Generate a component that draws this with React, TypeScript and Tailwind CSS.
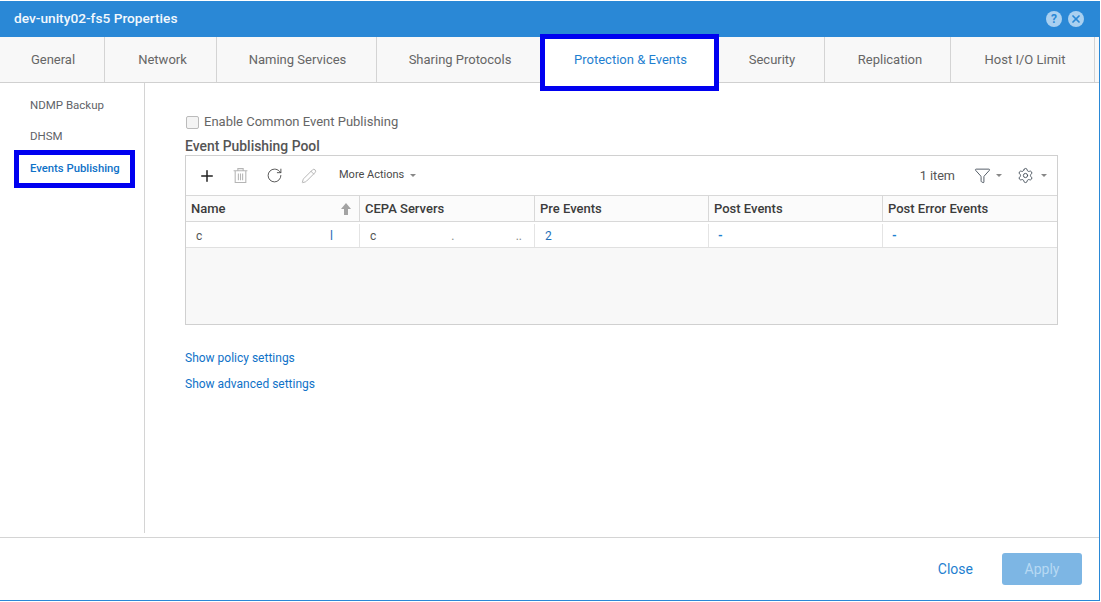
import { Filter, Pencil, Plus, RotateCw, Settings, X } from 'lucide-react';

const tabs = [
  { label: 'General', width: 'w-[105px] pl-[2px]' },
  { label: 'Network', width: 'w-[112px] pl-[4px]' },
  { label: 'Naming Services', width: 'w-[160px] pl-[2px]' },
  { label: 'Sharing Protocols', width: 'w-[166px] pl-[1px]' },
  { label: 'Protection & Events', width: 'w-[175px]', active: true },
  { label: 'Security', width: 'w-[107px] pl-[2px]' },
  { label: 'Replication', width: 'w-[126px] pl-[5px]' },
  { label: 'Host I/O Limit', width: 'w-[144px] pl-[5px]' },
];

const columns = [
  { label: 'Name', width: 'w-[174px]' },
  { label: 'CEPA Servers', width: 'w-[175px]' },
  { label: 'Pre Events', width: 'w-[174px]' },
  { label: 'Post Events', width: 'w-[174px]' },
  { label: 'Post Error Events', width: 'flex-1' },
];

const Caret = ({ className = 'ml-[6px]' }: { className?: string }) => (
  <span className={`${className} inline-block h-0 w-0 border-x-[3px] border-t-[3px] border-x-transparent border-t-[#888]`}></span>
);

const TrashIcon = () => (
  <svg viewBox="0 0 16 16" className="ml-[16px] h-[17px] w-[17px]" fill="none" stroke="#b5b5b5" strokeWidth="1">
    <path d="M1.5 3.5h13M5.5 3.5v-2h5v2M3 3.5v11h10v-11M6 6v6.5M8 6v6.5M10 6v6.5" />
  </svg>
);

const SortArrow = () => (
  <svg viewBox="0 0 12 14" className="ml-auto h-[14px] w-[12px]" fill="#a3a3a3">
    <path d="M6 1l5 6H8v6H4V7H1z" />
  </svg>
);

const App = () => {
  return (
    <div className="h-[602px] w-[1101px] overflow-hidden bg-white pt-px font-['Roboto',sans-serif] text-[13px] text-[#666]">
      <div className="flex h-[600px] w-[1100px] flex-col border-r border-b border-[#2a88d6]">
        <div className="flex h-[36px] shrink-0 items-center justify-between bg-[#2a88d6] pr-[15px] pl-[14px]">
          <span className="-mt-px text-[13.7px] font-medium text-[#f2f8fd]">dev-unity02-fs5 Properties</span>
          <div className="flex items-center gap-[6px]">
            <span className="flex h-4 w-4 items-center justify-center rounded-full bg-[#a9d0f0] text-[12px] leading-none font-bold text-[#2a88d6]">?</span>
            <span className="flex h-4 w-4 items-center justify-center rounded-full bg-[#a9d0f0]">
              <X className="h-3 w-3 text-[#2a88d6]" strokeWidth={3.5} />
            </span>
          </div>
        </div>

        <div className="flex h-[46px] shrink-0 border-b border-[#d0d0d0] bg-[#f8f8f8]">
          {tabs.map((tab) => (
            <div
              key={tab.label}
              className={
                tab.active
                  ? `relative flex ${tab.width} -mb-px items-center justify-center bg-white text-[#1f7fd0]`
                  : `flex ${tab.width} items-center justify-center border-r border-[#d4d4d4]`
              }
            >
              {tab.label}
              {tab.active && (
                <span className="absolute -top-[3px] -right-[1px] -bottom-[8px] -left-[3px] border-[5px] border-[#0000f0]"></span>
              )}
            </div>
          ))}
        </div>

        <div className="flex min-h-0 flex-1">
          <div className="h-[450px] w-[145px] shrink-0 border-r border-[#d4d4d4]">
            <div className="flex h-[46px] items-center pl-[30px] text-[11.5px] text-[#5f6368]">NDMP Backup</div>
            <div className="mb-[6px] flex h-[17px] items-center pl-[30px] -mt-px text-[11.5px] text-[#5f6368]">DHSM</div>
            <div className="relative mt-[14px] flex h-[20px] items-center pl-[30px] text-[11.3px] font-medium text-[#0f72c8]">
              Events Publishing
              <span className="absolute -top-[9px] -bottom-[9px] left-[14px] w-[121px] border-[5px] border-[#0000f0]"></span>
            </div>
          </div>

          <div className="min-w-0 flex-1 pt-[31px] pl-[40px]">
            <label className="ml-px flex h-[16px] items-center gap-[5px]">
              <span className="h-[13px] w-[13px] rounded-[2px] border border-[#bbb] bg-[#f4f4f4]"></span>
              Enable Common Event Publishing
            </label>
            <h3 className="mt-[8px] h-[16px] text-[13.9px] leading-[16px] font-medium text-[#555]">Event Publishing Pool</h3>

            <div className="mt-[1px] h-[170px] w-[873px] border border-[#d0d0d0] bg-[#f8f8f8]">
              <div className="flex h-[40px] items-center border-b border-[#d8d8d8] bg-white pr-[10px] pl-[12px]">
                <Plus className="h-[18px] w-[18px] text-[#222]" strokeWidth={2} />
                <TrashIcon />
                <RotateCw className="ml-[17px] h-[17px] w-[17px] text-[#444]" strokeWidth={1.25} />
                <Pencil className="ml-[18px] h-[16px] w-[16px] text-[#a8a8a8]" strokeWidth={1.25} />
                <span className="ml-[22px] text-[11px] text-[#4a4a4a]">More Actions</span>
                <Caret />
                <span className="ml-auto text-[12.7px] text-[#555]">1 item</span>
                <Filter className="ml-[19px] h-[17px] w-[17px] text-[#3f4a55]" strokeWidth={1.25} />
                <Caret className="ml-[5px]" />
                <Settings className="ml-[15px] h-[17px] w-[17px] text-[#3f4a55]" strokeWidth={1.25} />
                <Caret className="ml-[7px]" />
              </div>

              <div className="flex h-[26px] border-b border-[#d8d8d8] bg-[#fbfbfb]">
                {columns.map((col, i) => (
                  <div
                    key={col.label}
                    className={`flex ${col.width} items-center border-r border-[#d8d8d8] pr-[7px] pl-[5px] font-medium text-[#3c3c3c] last:border-r-0`}
                  >
                    {col.label}
                    {i === 0 && <SortArrow />}
                  </div>
                ))}
              </div>

              <div className="flex h-[26px] border-b border-[#e0e0e0] bg-white pt-[2px] text-[12px]">
                <div className="flex w-[174px] items-center justify-between border-r border-[#e4e4e4] pr-[26px] pl-[10px] text-[#555]">
                  <span>c</span>
                  <span className="text-[#1f6fb8]">l</span>
                </div>
                <div className="flex w-[175px] items-center border-r border-[#e4e4e4] pr-[12px] pl-[10px] text-[#555]">
                  <span>c</span>
                  <span className="ml-[75px] text-[#888]">.</span>
                  <span className="ml-auto text-[#888]">..</span>
                </div>
                <div className="flex w-[174px] items-center border-r border-[#e4e4e4] pl-[10px] text-[#1f6fb8]">2</div>
                <div className="flex w-[174px] items-center border-r border-[#e4e4e4] pl-[9px] font-bold text-[#1f7fd0]">-</div>
                <div className="flex flex-1 items-center pl-[9px] font-bold text-[#1f7fd0]">-</div>
              </div>
            </div>

            <div className="mt-[26px] text-[12px] leading-[14px] text-[#0f72c8]">Show policy settings</div>
            <div className="mt-[12px] text-[12px] leading-[14px] text-[#0f72c8]">Show advanced settings</div>
          </div>
        </div>

        <div className="flex h-[63px] shrink-0 items-center justify-end border-t border-[#d4d4d4] pr-[17px]">
          <span className="text-[14px] text-[#1f7fd0]">Close</span>
          <button className="ml-[29px] h-[32px] w-[80px] rounded-[3px] bg-[#7db6e4] text-[14px] text-[#b7d9f3]">Apply</button>
        </div>
      </div>
    </div>
  );
};

export default App;
